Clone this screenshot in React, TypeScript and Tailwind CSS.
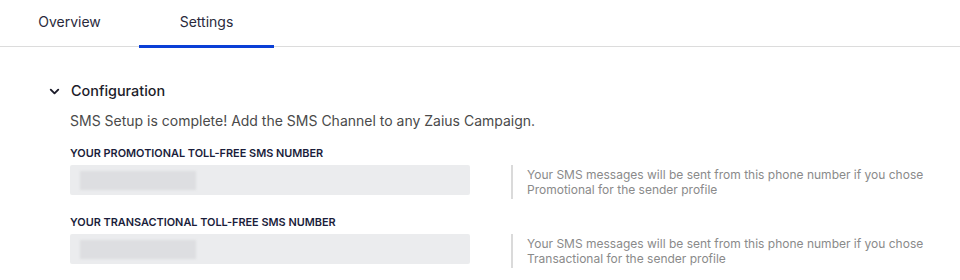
import { ChevronDown } from "lucide-react";

const fields = [
  {
    label: "YOUR PROMOTIONAL TOLL-FREE SMS NUMBER",
    kind: "Promotional",
  },
  {
    label: "YOUR TRANSACTIONAL TOLL-FREE SMS NUMBER",
    kind: "Transactional",
  },
];

const App = () => {
  return (
    <div className="w-[960px] h-[280px] bg-white overflow-hidden font-['Inter',sans-serif]">
      <nav className="flex h-[47px] border-b border-[#dcdcdc]">
        <div className="w-[139px] flex items-start justify-center pt-[11px] text-[14px] text-[#2a2a3c]">
          Overview
        </div>
        <div className="w-[135px] flex items-start justify-center pt-[11px] text-[14px] text-[#2a2a3c] border-b-[3px] border-[#0a3fd6] -mb-[2px]">
          Settings
        </div>
      </nav>

      <section className="pl-[47px] pt-[33px]">
        <div className="flex items-center gap-[9px] h-[22px]">
          <ChevronDown className="h-[15px] w-[15px] text-[#1c1c2a]" strokeWidth={3} />
          <h3 className="text-[14.4px] font-medium text-[#1c1c2a]">Configuration</h3>
        </div>

        <div className="pl-[23px]">
          <p className="mt-[10px] text-[14px] leading-[18px] text-[#4a4a4a]">
            SMS Setup is complete! Add the SMS Channel to any Zaius Campaign.
          </p>

          {fields.map((f, i) => (
            <div key={f.kind} className={i === 0 ? "mt-[17px]" : "mt-[17px]"}>
              <div className="text-[10.9px] leading-[12px] font-semibold text-[#1a1d3b]">
                {f.label}
              </div>
              <div className="flex items-start mt-[6px]">
                <div className="w-[400px] h-[30px] bg-[#ebecee] rounded-[2px] flex items-center pl-[10px]">
                  <div className="w-[116px] h-[19px] bg-[#dddee1] blur-[1px]" />
                </div>
                <div className="ml-[41px] border-l-2 border-[#dadada] pl-[14px] text-[12px] leading-[15px] text-[#8a8a8a] py-[2px]">
                  Your SMS messages will be sent from this phone number if you chose
                  <br />
                  {f.kind} for the sender profile
                </div>
              </div>
            </div>
          ))}
        </div>
      </section>
    </div>
  );
};

export default App;
